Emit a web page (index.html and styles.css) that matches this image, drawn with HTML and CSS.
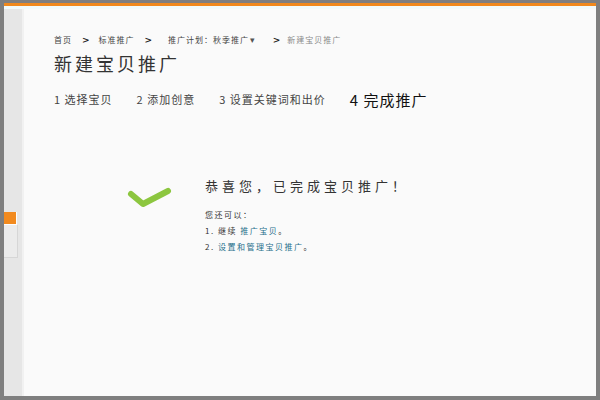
FILE: index.html
```html
<!DOCTYPE html>
<html lang="zh-CN">
<head>
    <meta charset="UTF-8">
    <title>新建宝贝推广</title>
    <link rel="stylesheet" href="styles.css">
</head>
<body>
    <div class="screen">
        <div class="top-strip"></div>
        <div class="frame">
            <div class="sidebar">
                <div class="side-tab"></div>
                <div class="side-box"></div>
            </div>
            <div class="main">
                <div class="crumbs">
                    <span>首页</span>
                    <span class="sep">&gt;</span>
                    <span>标准推广</span>
                    <span class="sep sep-wide">&gt;</span>
                    <span class="crumb-plan">推广计划：秋季推广<span class="caret">▾</span></span>
                    <span class="sep sep-tight">&gt;</span>
                    <span class="crumb-last">新建宝贝推广</span>
                </div>
                <h1>新建宝贝推广</h1>
                <div class="steps">
                    <span class="step">1 选择宝贝</span>
                    <span class="step">2 添加创意</span>
                    <span class="step">3 设置关键词和出价</span>
                    <span class="step step-current">4 完成推广</span>
                </div>
                <div class="result">
                    <svg class="check" width="48" height="30" viewBox="0 0 48 30">
                        <polyline points="5,10 17,20 42,7" fill="none" stroke="#8cc63f" stroke-width="6" stroke-linecap="round" stroke-linejoin="round"/>
                    </svg>
                    <div class="result-text">
                        <div class="congrats">恭喜您，已完成宝贝推广！</div>
                        <div class="next">您还可以：</div>
                        <div class="next">1. 继续 <a href="#">推广宝贝</a>。</div>
                        <div class="next">2. <a href="#">设置和管理宝贝推广</a>。</div>
                    </div>
                </div>
            </div>
        </div>
    </div>
</body>
</html>
```

FILE: styles.css
```css
body {
    margin: 0;
    background-color: #7f7f7f;
    font-family: "Noto Sans CJK SC", "Liberation Sans", sans-serif;
    color: #333;
}
.screen {
    width: 592px;
    height: 393px;
    margin: 3px 0 0 4px;
    border-top: 3px solid #f0891d;
    box-sizing: border-box;
    display: flex;
    flex-direction: column;
    background-color: #fafafa;
}
.top-strip {
    height: 3px;
    background-color: #f1fafb;
}
.frame {
    flex: 1;
    display: flex;
}
.sidebar {
    width: 18px;
    background-color: #e6e6e6;
    border-right: 2px solid #f1f1f1;
    padding-top: 203px;
}
.side-tab {
    width: 12px;
    height: 12px;
    background-color: #f28a1e;
    border-right: 1px solid #fdfdfd;
    border-bottom: 1px solid #fdfdfd;
}
.side-box {
    width: 13px;
    height: 32px;
    border-right: 1px solid #d6d6d6;
    border-bottom: 1px solid #d6d6d6;
    background-color: #ebebeb;
}
.main {
    flex: 1;
    padding: 25px 0 0 30px;
}
.crumbs {
    font-size: 8px;
    line-height: 12px;
    letter-spacing: 1px;
    color: #444;
    display: flex;
    align-items: center;
}
.sep {
    font-family: "DejaVu Sans", sans-serif;
    font-weight: bold;
    font-size: 9px;
    color: #222;
    margin: 0 8px 0 10px;
}
.sep-wide {
    margin-right: 15px;
}
.sep-tight {
    margin: 0 6px 0 17px;
}
.caret {
    font-family: "DejaVu Sans", sans-serif;
    font-size: 9px;
    color: #555;
    margin-left: 1px;
}
.crumb-last {
    color: #8a8a8a;
}
h1 {
    margin: 6px 0 0;
    font-size: 18px;
    line-height: 22px;
    font-weight: normal;
    letter-spacing: 3px;
    color: #333;
}
.steps {
    margin-top: 15px;
    display: flex;
    align-items: center;
    gap: 24px;
    height: 20px;
}
.step {
    font-size: 11px;
    letter-spacing: 1px;
    color: #444;
}
.step-current {
    font-size: 15px;
    color: #111;
}
.result {
    margin-top: 67px;
    display: flex;
    align-items: flex-start;
}
.check {
    margin: 8px 0 0 72px;
}
.result-text {
    margin-left: 31px;
}
.congrats {
    font-size: 13px;
    line-height: 20px;
    letter-spacing: 4px;
    color: #333;
    margin-bottom: 11px;
}
.next {
    font-size: 8px;
    line-height: 16px;
    letter-spacing: 1.5px;
    color: #333;
}
.next a {
    color: #1f6f8b;
    text-decoration: none;
}
```
